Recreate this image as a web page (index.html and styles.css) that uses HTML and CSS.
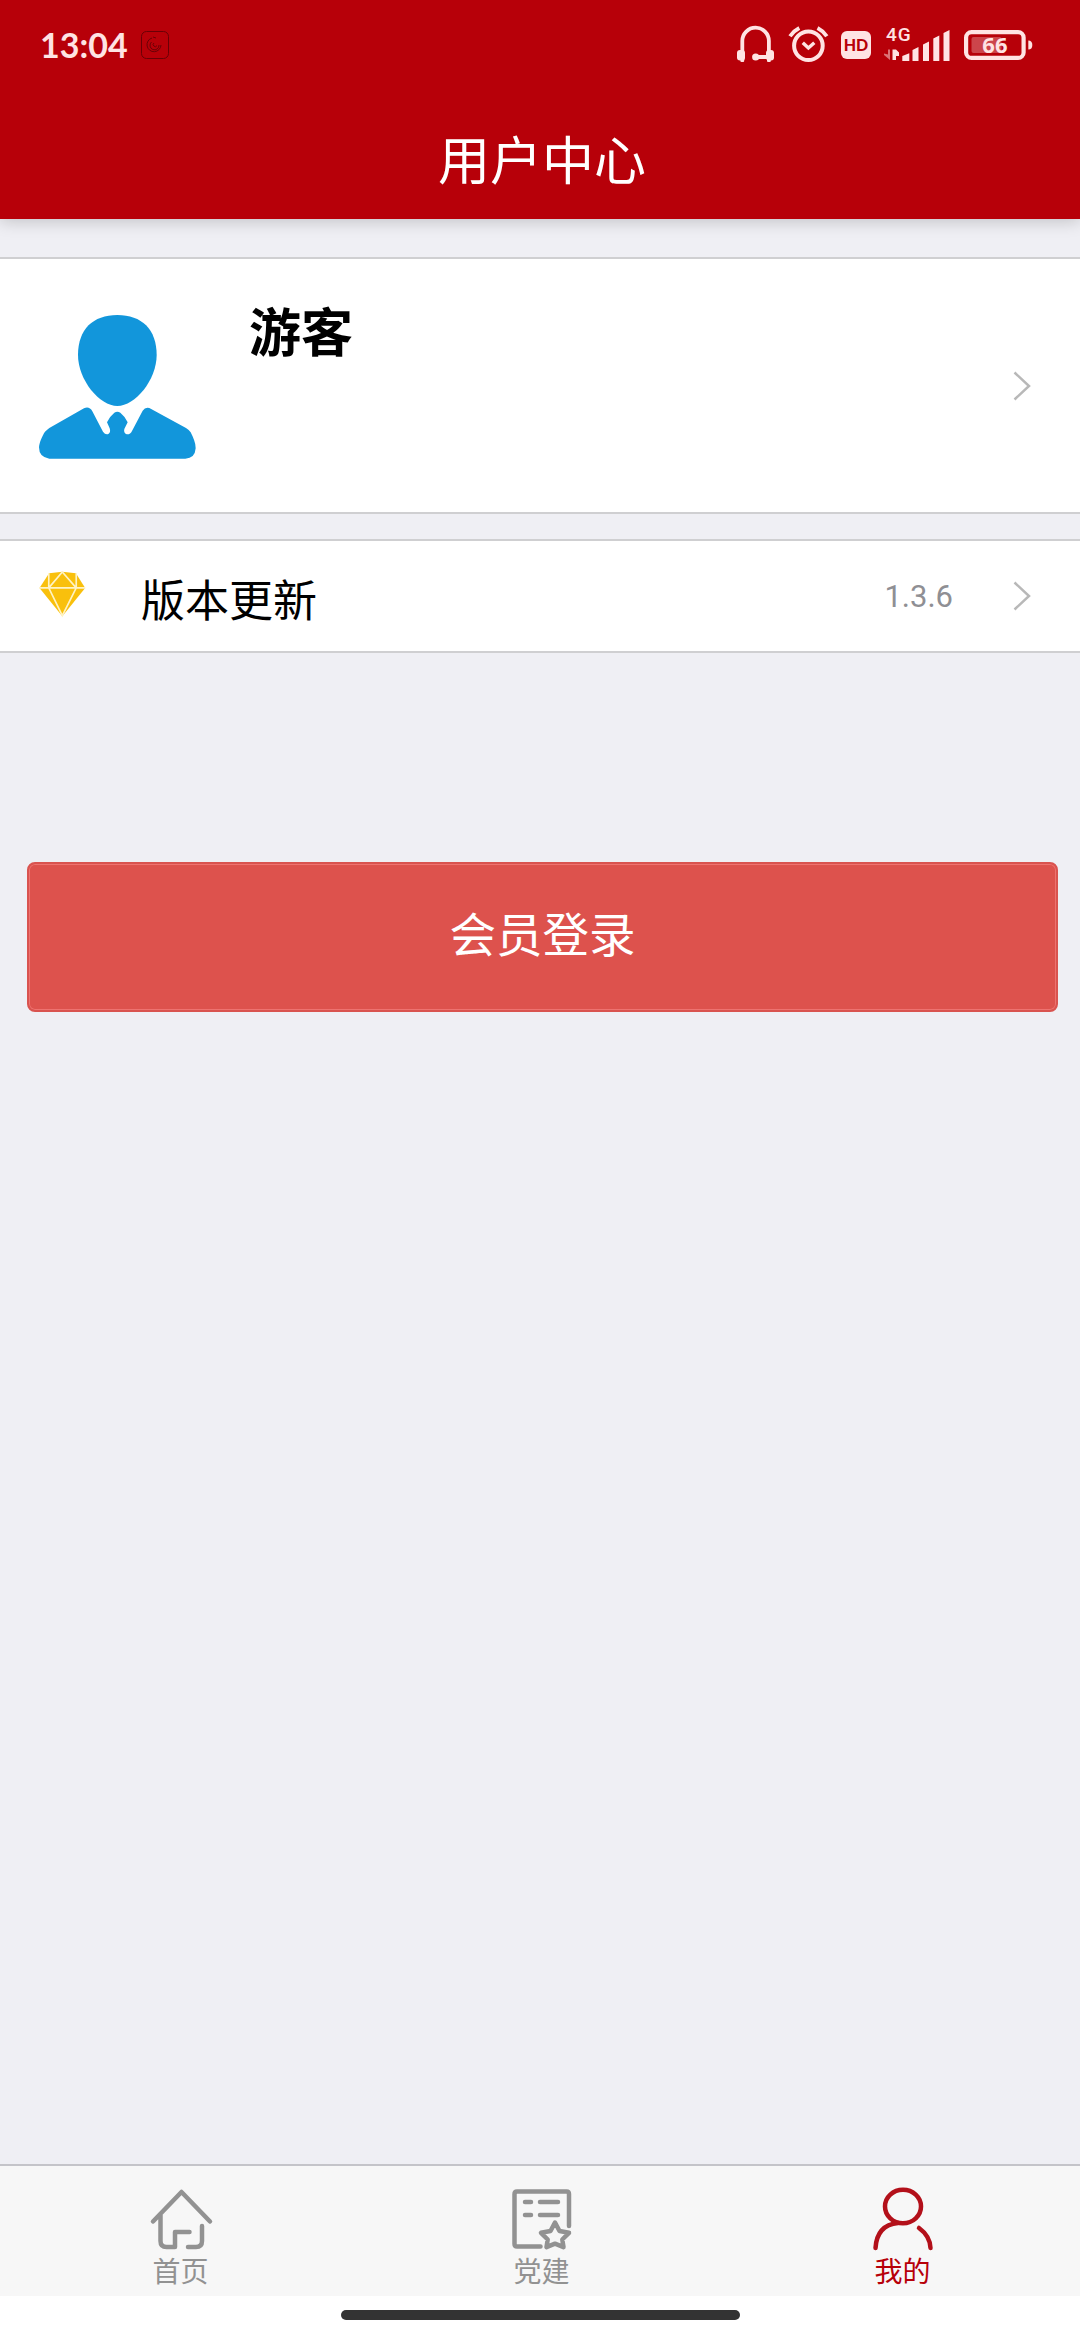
FILE: index.html
```
<!DOCTYPE html>
<html lang="zh-CN">
<head>
  <meta charset="UTF-8">
  <meta name="viewport" content="width=device-width, initial-scale=1.0">
  <title>用户中心</title>
  <link rel="stylesheet" href="styles.css">
</head>
<body>
  <header class="header">
    <div class="status">
      <span class="time">13:04</span>
      <svg class="app-icon" width="28" height="28" viewBox="0 0 28 28" fill="none" stroke="#6a0006" stroke-width="1">
        <rect x="0.5" y="0.5" width="27" height="27" rx="5"/>
        <path d="M11 7a7 7 0 1 0 9 7M12 6l3 1M10.500 11a4.500 4.500 0 1 0 7.500 3M13 12a2 2 0 1 0 3 2.500"/>
      </svg>
      <div class="status-icons">
        <svg width="40" height="40" viewBox="0 0 40 40" fill="#ffe3e3">
          <path d="M6.3 35V16a13.3 13.3 0 0 1 26.6 0V35M31 32H20" fill="none" stroke="#ffe3e3" stroke-width="3.8"/>
          <rect x="1" y="25" width="8" height="10.5" rx="3"/>
          <rect x="30" y="25" width="8" height="10.5" rx="3"/>
          <rect x="4.4" y="30" width="3.8" height="7" rx="1"/>
          <rect x="31" y="30" width="3.8" height="7" rx="1"/>
          <circle cx="19.7" cy="32" r="3.6"/>
        </svg>
        <svg width="41" height="40" viewBox="0 0 41 40" fill="none" stroke="#ffe3e3" stroke-width="4">
          <circle cx="20.4" cy="20.7" r="14.3"/>
          <path d="M14.8 17.7l5.6 5.3 5.9-5.3" stroke-width="3.4"/>
          <path d="M2 11.2Q5.500 6 11.300 3M38.800 11.200Q35.300 6 29.500 3" stroke-width="3.800"/>
        </svg>
        <span class="hd">HD</span>
        <svg width="68" height="40" viewBox="0 0 68 40" fill="#ffe3e3">
          <text class="net" x="3" y="16.2">4G</text>
          <path d="M5 24.500h2v10.500l-6-5v-1.500l4 1z" opacity=".5"/>
          <path d="M9.500 24.500h3.500l3 3v3.500h-3v4h-3.500z"/>
          <path d="M19.300 31l7-2.800v7.800h-7zM29.500 25l6-3v14h-6zM40 19.500l6-3v19.500h-6zM50.300 13.500l6-3v25.500h-6zM60.500 8l6-3v31h-6z"/>
        </svg>
        <svg width="70" height="40" viewBox="0 0 70 40" fill="#ffe3e3">
          <rect x="3.100" y="7.100" width="57.500" height="25.800" rx="5.500" fill="none" stroke="#ffe3e3" stroke-width="4.200"/>
          <rect x="8.500" y="12" width="30" height="16" rx="2" opacity=".3"/>
          <path d="M65.300 15.500q4 0 4 4.500t-4 4.500z"/>
          <text class="level" x="19.300" y="28.400">66</text>
        </svg>
      </div>
    </div>
    <h1>用户中心</h1>
  </header>

  <main class="content">
    <section class="card profile">
      <svg width="157" height="146" viewBox="117 222 471 438" fill="#1296db">
        <path d="M352 225C425 225 470 268 470 345C470 420 405 498 352 498S234 420 234 345C234 268 279 225 352 225Z"/>
        <path d="M252 505Q268 498 277 514L309 575Q316 585 325 582Q333 577 329 565L321 547Q330 528 343 518Q352 513 361 518Q375 529 383 547L373 567Q370 579 380 583Q391 584 396 573L428 512Q436 500 448 504L558 564Q567 569 572 577C580 594 587 607 587 625Q585 655 556 656H148Q117 652 117 622C118 607 127 587 135 575Q140 570 148 564Z"/>
      </svg>
      <h2>游客</h2>
      <svg class="arrow" width="18" height="30" viewBox="0 0 18 30">
        <path d="M1.500 1.500L16 15L1.500 28.500"/>
      </svg>
    </section>

    <section class="card row">
      <svg class="gem" width="47" height="46" viewBox="118 213 141 139">
        <path d="M148 220L188 215L229 220L257 264L188 350L119 264Z" fill="#f9c00c"/>
        <path d="M119 264H257M147 220V264L188 348L230 264V220M147 264L188 216L230 264" fill="none" stroke="#fff3c4" stroke-width="5"/>
      </svg>
      <span class="label">版本更新</span>
      <span class="version">1.3.6</span>
      <svg class="arrow" width="18" height="30" viewBox="0 0 18 30">
        <path d="M1.500 1.500L16 15L1.500 28.500"/>
      </svg>
    </section>

    <button class="login">会员登录</button>
  </main>

  <nav class="tabs">
    <a class="tab">
      <svg width="60" height="62" viewBox="0 0 60 62">
        <path d="M2 32.500L30.500 3L59 32.500M9.500 26V52Q9.500 58 15.500 58H24V43H38.500M51 37V52Q51 58 45 58H37"/>
      </svg>
      <span>首页</span>
    </a>
    <a class="tab">
      <svg width="60" height="62" viewBox="0 0 60 62">
        <path d="M28.500 57.500H5Q2.500 57.500 2.500 55V5Q2.500 2.500 5 2.500H54.500Q57 2.500 57 5V37"/>
        <path d="M13 13h6M28 13h18M13 26h6M28 26h18"/>
        <path d="M43 33.500l4.500 8.500 9.500 1.800-6.700 6.700 1.200 7.700-8.500-3.500-8.500 3.500 1.200-7.700-6.700-6.700 9.500-1.800z"/>
      </svg>
      <span>党建</span>
    </a>
    <a class="tab active">
      <svg width="60" height="62" viewBox="0 0 60 62">
        <ellipse cx="30" cy="17.500" rx="18" ry="16.700"/>
        <path d="M2.500 59Q4 36 25 34M46 39Q57 47 57.500 59"/>
      </svg>
      <span>我的</span>
    </a>
  </nav>

  <div class="gesture"><div class="pill"></div></div>
</body>
</html>
```

FILE: styles.css
```
* {
  box-sizing: border-box;
}

body {
  margin: 0;
  height: 2340px;
  display: flex;
  flex-direction: column;
  font-family: Roboto, "Noto Sans CJK SC", sans-serif;
  background: #efeff4;
  color: #000;
  overflow: hidden;
}

svg {
  display: block;
  flex-shrink: 0;
  overflow: visible;
}

/* Header */
.header {
  height: 219px;
  background: #b70009;
  color: #fff;
  box-shadow: 0 2px 16px rgba(0, 0, 0, 0.2);
}

.status {
  display: flex;
  height: 90px;
  padding: 0 47px 0 40px;
  align-items: center;
}

.time {
  width: 101px;
  font: 700 34px/40px Lato, sans-serif;
  color: #ffe3e3;
}

.status-icons {
  display: flex;
  align-items: center;
  gap: 12px;
  margin-left: auto;
}

.hd {
  width: 30px;
  height: 28px;
  border-radius: 6px;
  background: #ffe3e3;
  color: #b70009;
  font: 900 16px/28px Lato, sans-serif;
  text-align: center;
}

.net {
  font: 500 19px Roboto, sans-serif;
  letter-spacing: 1px;
}

.level {
  font: 700 22px "Open Sans", sans-serif;
}

h1 {
  margin: 0;
  padding-left: 4px;
  font-size: 52px;
  font-weight: 400;
  line-height: 146px;
  text-align: center;
}

/* Cards */
.content {
  flex: 1;
  padding-top: 38px;
}

.card {
  display: flex;
  background: #fff;
  border-top: 2px solid #cfcfd1;
  border-bottom: 2px solid #cfcfd1;
  padding: 0 49px 0 39px;
}

.profile {
  height: 257px;
  padding-top: 55px;
}

h2 {
  margin: -17px 0 0 53px;
  font-size: 52px;
  font-weight: 700;
  line-height: 76px;
}

.arrow {
  margin-left: auto;
  fill: none;
  stroke: #b8b8b8;
  stroke-width: 2.5;
}

.profile .arrow {
  margin-top: 57px;
}

.row {
  height: 114px;
  margin-top: 25px;
  align-items: center;
}

.gem {
  margin-top: -5px;
}

.label {
  margin: 3px 0 0 55px;
  font-size: 44px;
}

.version {
  margin-left: auto;
  font-size: 31px;
  color: #8f8f94;
}

.row .arrow {
  margin-left: 60px;
}

.login {
  display: block;
  width: 1031px;
  height: 150px;
  margin: 209px 0 0 27px;
  padding: 0 0 12px;
  border: 2px solid #d9534f;
  border-radius: 8px;
  background: #dd524d;
  box-shadow: inset 0 0 0 1px #ee7370;
  color: #fff;
  font-family: inherit;
  font-size: 46.5px;
}

/* Bottom tabs */
.tabs {
  display: flex;
  height: 132px;
  border-top: 2px solid #c4c4c9;
  background: #f7f7f7;
  color: #929292;
}

.tab {
  flex: 0 0 361px;
  display: flex;
  flex-direction: column;
  align-items: center;
  padding-top: 23px;
  font-size: 28px;
  line-height: 43px;
}

.tab svg {
  fill: none;
  stroke: #929292;
  stroke-width: 4.5;
  stroke-linecap: round;
  stroke-linejoin: round;
}

.tab.active {
  color: #b70009;
}

.tab.active svg {
  stroke: #b3101a;
}

.gesture {
  height: 44px;
  padding-top: 14px;
  background: #fff;
}

.pill {
  width: 399px;
  height: 10px;
  margin: 0 auto;
  border-radius: 5px;
  background: #333;
}
```
